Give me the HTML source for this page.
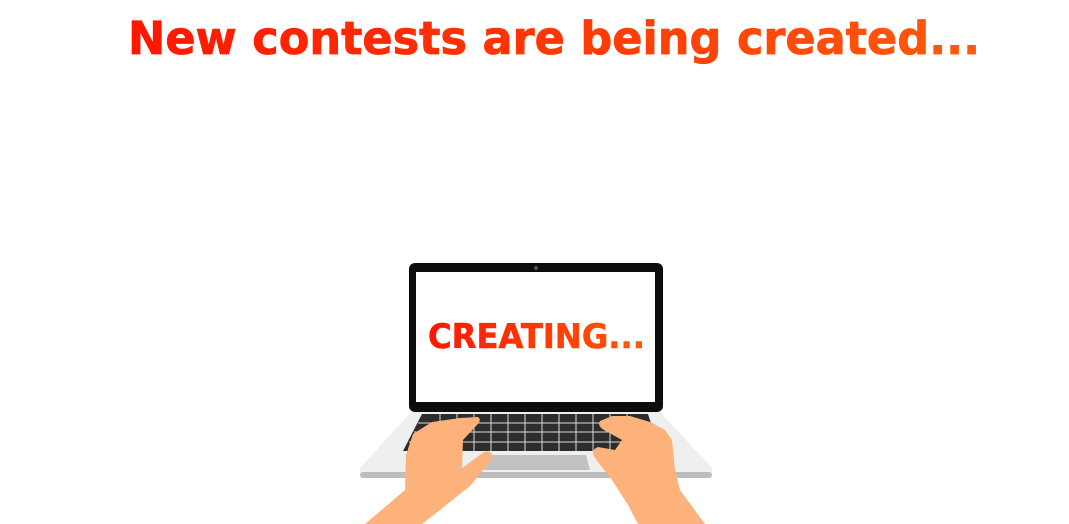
<!DOCTYPE html>
<html><head><meta charset="utf-8"><style>
html,body{margin:0;padding:0;background:#fff;width:1069px;height:524px;overflow:hidden}
svg{display:block}
</style></head><body>
<svg width="1069" height="524" viewBox="0 0 1069 524" xmlns="http://www.w3.org/2000/svg">
<defs>
<linearGradient id="g" x1="0" x2="1" y1="0" y2="0">
<stop offset="0" stop-color="#ff1600"/><stop offset="1" stop-color="#ff5a0a"/>
</linearGradient>
</defs>
<text x="128" y="54" font-family="DejaVu Sans, sans-serif" font-weight="bold" font-size="45" fill="url(#g)" stroke="url(#g)" stroke-width="0.8" textLength="852" lengthAdjust="spacingAndGlyphs">New contests are being created...</text>
<!-- base -->
<path d="M411 412 L660 412 L712 468 L712 474 Q712 478 706 478 L366 478 Q360 478 360 474 L360 468 Z" fill="#efefef"/>
<rect x="360" y="472" width="352" height="6" rx="3" fill="#bdbdbd"/>
<!-- keyboard -->
<path d="M422 414 L648 414 L660 451 L403 451 Z" fill="#2d2d2d"/>
<g stroke="#dcdcdc" stroke-width="1">
<line x1="418" y1="423" x2="653" y2="423"/><line x1="414" y1="432" x2="656" y2="432"/><line x1="409" y1="442" x2="659" y2="442"/>
</g>
<g stroke="#dcdcdc" stroke-width="1">
<path d="M440 414v37M457 414v37M474 414v37M491 414v37M508 414v37M525 414v37M542 414v37M559 414v37M576 414v37M593 414v37M610 414v37M627 414v37"/>
</g>
<path d="M484 455 L586 455 L590 470 L480 470 Z" fill="#c1c1c1"/>
<!-- screen -->
<rect x="409" y="263" width="254" height="149" rx="6" fill="#0d0d0d"/>
<rect x="416" y="272" width="239" height="130" fill="#fff"/>
<circle cx="536" cy="268" r="2" fill="#555"/>
<text x="428" y="348" font-family="DejaVu Sans, sans-serif" font-weight="bold" font-size="34" fill="url(#g)" stroke="url(#g)" stroke-width="0.6" textLength="217" lengthAdjust="spacingAndGlyphs">CREATING...</text>
<!-- left hand -->
<path d="M365 524 L405 490 L406 455 L413 434 L432 422 L460 418 L478 417 Q482 420 477 425 L463 440 L462 468 L484 452 Q494 450 492 459 L470 486 L440 510 L422 524 Z" fill="#fdb27b"/>
<!-- right hand -->
<path d="M705 524 L680 490 L675 470 L672 440 L665 430 L650 422 L630 416 L612 416 L600 421 Q597 426 604 430 L622 440 L615 450 L598 447 Q590 450 595 458 L612 480 L628 505 L638 524 Z" fill="#fdb27b"/>
</svg>
</body></html>
